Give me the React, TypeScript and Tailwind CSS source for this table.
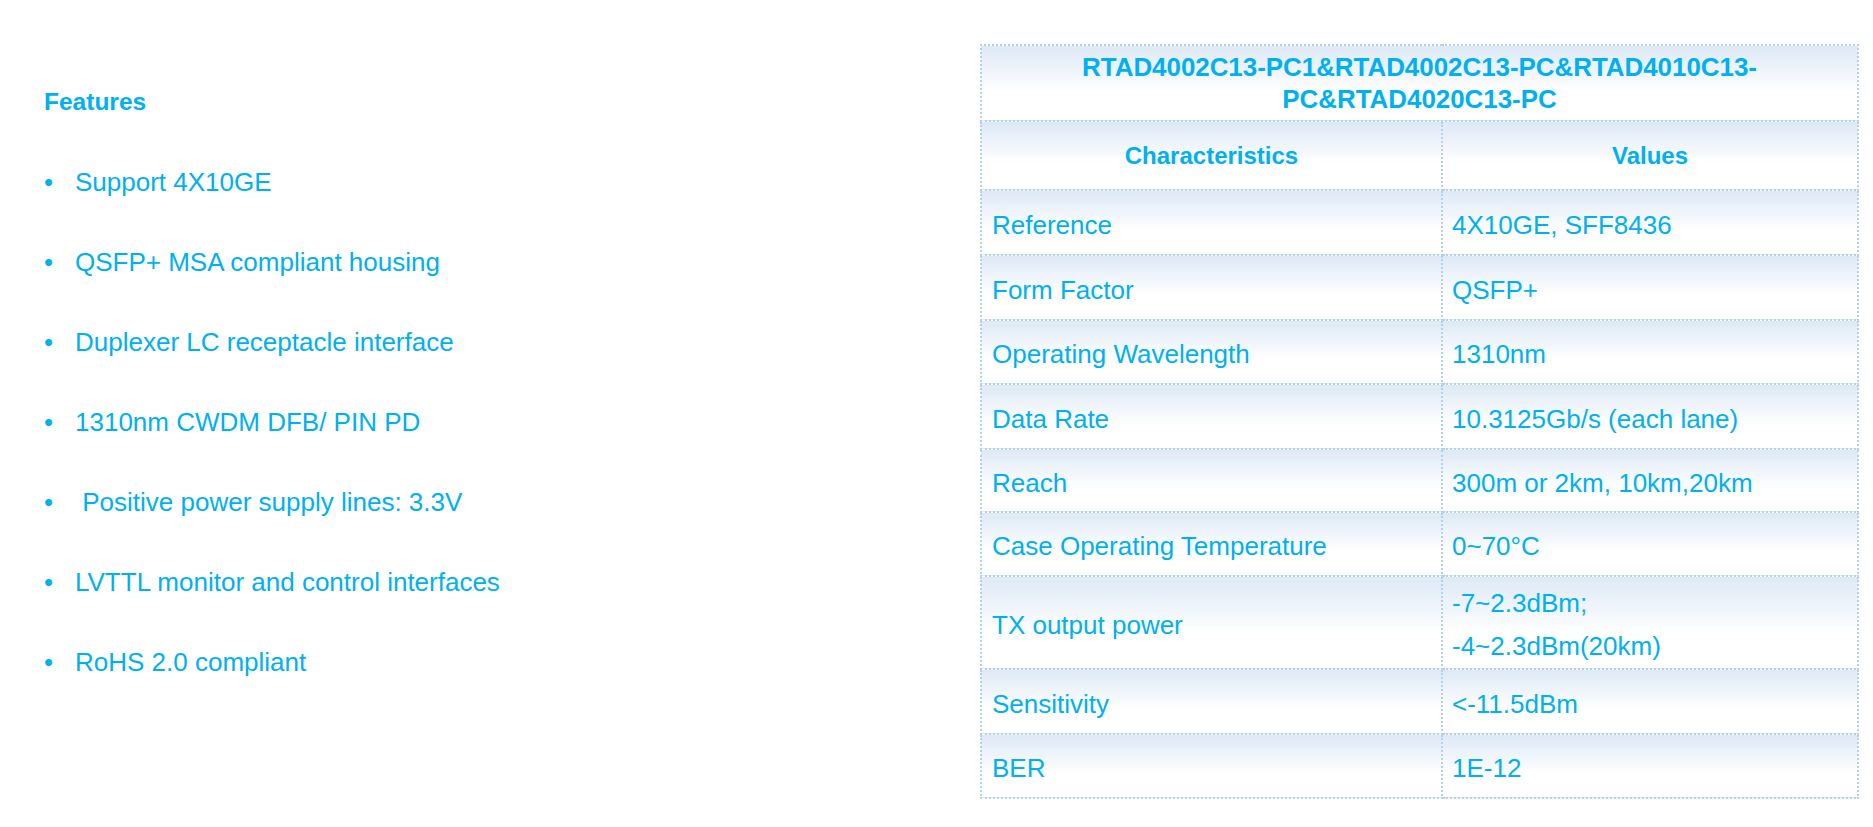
const features = [
  "Support 4X10GE",
  "QSFP+ MSA compliant housing",
  "Duplexer LC receptacle interface",
  "1310nm CWDM DFB/ PIN PD",
  "\u00a0Positive power supply lines: 3.3V",
  "LVTTL monitor and control interfaces",
  "RoHS 2.0 compliant",
]

const rows: { name: string; value: string[]; h: string }[] = [
  { name: "Reference", value: ["4X10GE, SFF8436"], h: "h-[65px]" },
  { name: "Form Factor", value: ["QSFP+"], h: "h-[65px]" },
  { name: "Operating Wavelength", value: ["1310nm"], h: "h-[64px]" },
  { name: "Data Rate", value: ["10.3125Gb/s (each lane)"], h: "h-[65px]" },
  { name: "Reach", value: ["300m or 2km, 10km,20km"], h: "h-[63px]" },
  { name: "Case Operating Temperature", value: ["0~70°C"], h: "h-[64px]" },
  { name: "TX output power", value: ["-7~2.3dBm;", "-4~2.3dBm(20km)"], h: "h-[93px]" },
  { name: "Sensitivity", value: ["<-11.5dBm"], h: "h-[65px]" },
  { name: "BER", value: ["1E-12"], h: "h-[64px]" },
]

const cell =
  "border-2 border-dotted border-[#b3d0ef] bg-linear-to-b from-[#dde9f6] to-white to-[62%] p-0 align-middle"

export default function App() {
  return (
    <div className="flex min-h-[827px] w-[1873px] bg-white font-['Liberation_Sans',Arial,sans-serif] text-[#00b0f0]">
      {/* left: feature list */}
      <div className="w-[980px] shrink-0 pl-[44px] pt-[62px]">
        <div className="text-[24.5px] font-bold leading-[80px]">Features</div>
        <ul>
          {features.map((f) => (
            <li key={f} className="flex text-[26px] leading-[80px]">
              <span className="w-[31px] shrink-0">•</span>
              <span>{f}</span>
            </li>
          ))}
        </ul>
      </div>

      {/* right: spec table */}
      <div className="pt-[44px]">
        <table className="w-[877px] table-fixed border-collapse text-[26px]">
          <colgroup>
            <col className="w-[461px]" />
            <col className="w-[416px]" />
          </colgroup>
          <tbody>
            <tr className="h-[76px]">
              <td colSpan={2} className={`${cell} text-center text-[25.9px] font-bold leading-[32px]`}>
                RTAD4002C13-PC1&amp;RTAD4002C13-PC&amp;RTAD4010C13-
                <br />
                PC&amp;RTAD4020C13-PC
              </td>
            </tr>
            <tr className="h-[69px]">
              <td className={`${cell} text-center text-[24px] font-bold`}>Characteristics</td>
              <td className={`${cell} text-center text-[24px] font-bold`}>Values</td>
            </tr>
            {rows.map((r) => (
              <tr key={r.name} className={r.h}>
                <td className={`${cell} pl-[10px] pt-[5px]`}>{r.name}</td>
                <td className={`${cell} pl-[9px] pt-[5px] ${r.value.length > 1 ? "leading-[43px]" : ""}`}>
                  {r.value.map((v) => (
                    <div key={v}>{v}</div>
                  ))}
                </td>
              </tr>
            ))}
          </tbody>
        </table>
      </div>
    </div>
  )
}
